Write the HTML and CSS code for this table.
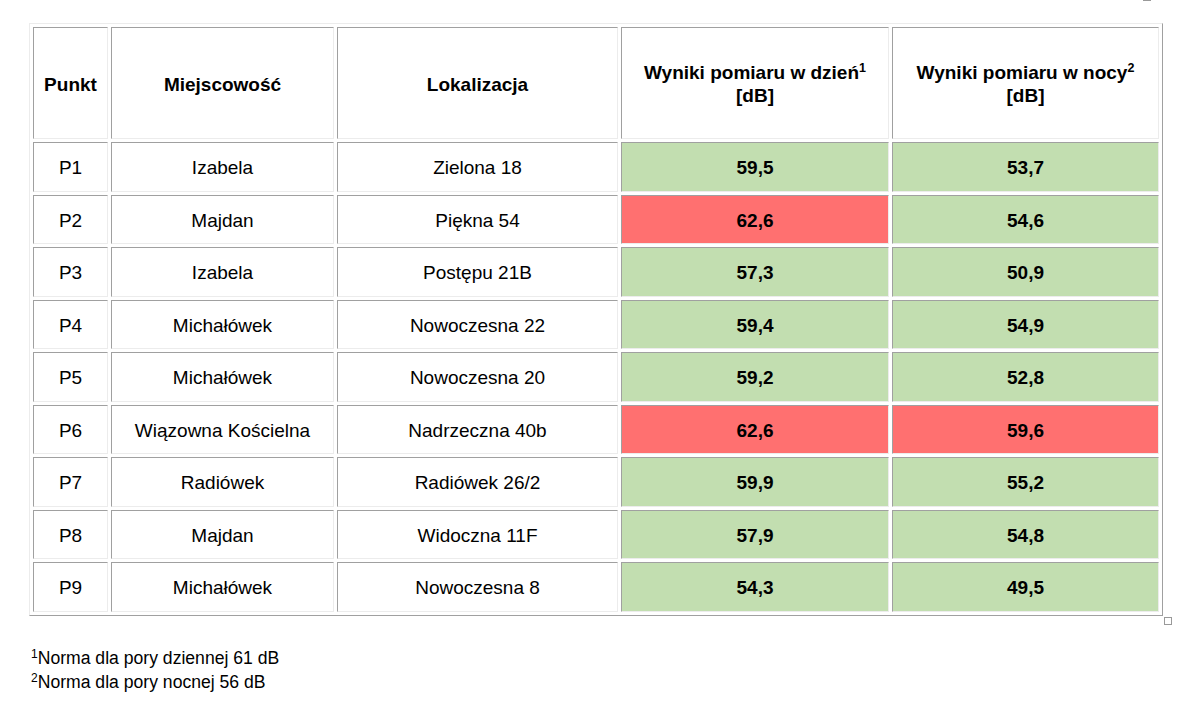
FILE: index.html
```html
<!DOCTYPE html>
<html lang="pl">
<head>
<meta charset="utf-8">
<title>Wyniki pomiaru</title>
<link rel="stylesheet" href="styles.css">
</head>
<body>
<div class="page">
  <div class="table-wrap">
    <span class="handle handle-top"></span>
    <table class="results">
      <colgroup>
        <col class="c-punkt">
        <col class="c-miejsc">
        <col class="c-lok">
        <col class="c-day">
        <col class="c-night">
      </colgroup>
      <thead>
        <tr>
          <th>Punkt</th>
          <th>Miejscowość</th>
          <th>Lokalizacja</th>
          <th>Wyniki pomiaru w dzień<sup>1</sup><br>[dB]</th>
          <th>Wyniki pomiaru w nocy<sup>2</sup><br>[dB]</th>
        </tr>
      </thead>
      <tbody>
        <tr><td>P1</td><td>Izabela</td><td>Zielona 18</td><td class="val ok">59,5</td><td class="val ok">53,7</td></tr>
        <tr><td>P2</td><td>Majdan</td><td>Piękna 54</td><td class="val bad">62,6</td><td class="val ok">54,6</td></tr>
        <tr><td>P3</td><td>Izabela</td><td>Postępu 21B</td><td class="val ok">57,3</td><td class="val ok">50,9</td></tr>
        <tr><td>P4</td><td>Michałówek</td><td>Nowoczesna 22</td><td class="val ok">59,4</td><td class="val ok">54,9</td></tr>
        <tr><td>P5</td><td>Michałówek</td><td>Nowoczesna 20</td><td class="val ok">59,2</td><td class="val ok">52,8</td></tr>
        <tr><td>P6</td><td>Wiązowna Kościelna</td><td>Nadrzeczna 40b</td><td class="val bad">62,6</td><td class="val bad">59,6</td></tr>
        <tr><td>P7</td><td>Radiówek</td><td>Radiówek 26/2</td><td class="val ok">59,9</td><td class="val ok">55,2</td></tr>
        <tr><td>P8</td><td>Majdan</td><td>Widoczna 11F</td><td class="val ok">57,9</td><td class="val ok">54,8</td></tr>
        <tr><td>P9</td><td>Michałówek</td><td>Nowoczesna 8</td><td class="val ok">54,3</td><td class="val ok">49,5</td></tr>
      </tbody>
    </table>
    <span class="handle handle-bottom"></span>
  </div>
  <div class="notes">
    <p><sup>1</sup>Norma dla pory dziennej 61 dB</p>
    <p><sup>2</sup>Norma dla pory nocnej 56 dB</p>
  </div>
</div>
</body>
</html>
```

FILE: styles.css
```css
html, body {
  margin: 0;
  padding: 0;
  background: #ffffff;
}

body {
  font-family: "Liberation Sans", Arial, sans-serif;
  color: #000000;
}

.page {
  padding: 23px 0 0 29px;
}

.table-wrap {
  position: relative;
  width: 1134px;
}

.results {
  border-collapse: separate;
  border-spacing: 3px;
  border: 1px solid;
  border-color: #ececec #a0a0a0 #a0a0a0 #ececec;
  table-layout: fixed;
  width: 1134px;
  font-size: 19px;
}

.c-punkt { width: 75px; }
.c-miejsc { width: 223px; }
.c-lok { width: 281px; }
.c-day { width: 268px; }
.c-night { width: 267px; }

.results th,
.results td {
  border: 1px solid;
  border-color: #a0a0a0 #ececec #ececec #a0a0a0;
  text-align: center;
  vertical-align: middle;
  padding: 0;
  box-sizing: border-box;
}

.results th {
  height: 112px;
  font-weight: bold;
  line-height: 23px;
  padding-top: 2px;
}

.results td {
  height: 49.5px;
  line-height: 22px;
  padding-top: 3px;
}

.results sup {
  font-size: 12.5px;
  line-height: 0;
  vertical-align: 7px;
}

.results td.val {
  font-weight: bold;
}

.results td.ok {
  background: #c2deb0;
}

.results td.bad {
  background: #ff7070;
}

.handle {
  position: absolute;
  width: 6px;
  height: 6px;
  border: 1px solid #999999;
  background: #ffffff;
}

.handle-top {
  top: -30px;
  left: 1114px;
}

.handle-bottom {
  bottom: -9px;
  right: -9px;
}

.notes {
  margin-top: 30px;
  padding-left: 2px;
  font-size: 17.6px;
  line-height: 24px;
}

.notes p {
  margin: 0;
}

.notes sup {
  font-size: 12px;
  line-height: 0;
  vertical-align: 6px;
}
```
